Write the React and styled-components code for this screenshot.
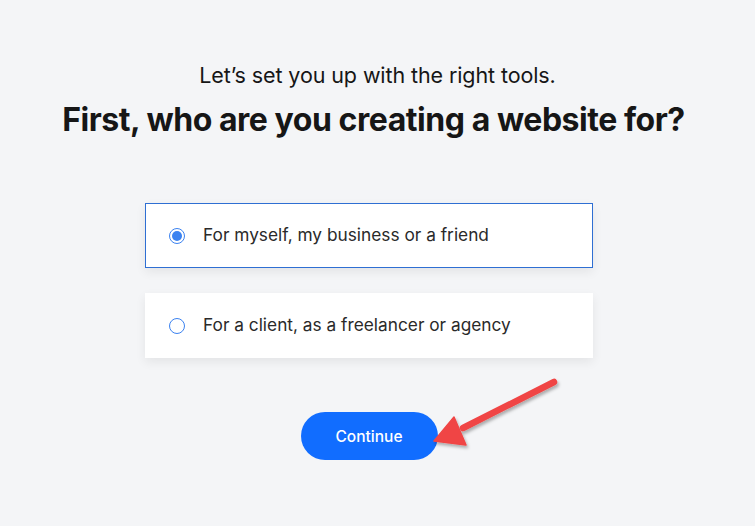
import React, { useState } from "react";
import styled, { createGlobalStyle } from "styled-components";

const GlobalStyle = createGlobalStyle`
  html, body {
    margin: 0;
    padding: 0;
    background: #f4f5f7;
    font-family: Inter, "Noto Sans", sans-serif;
    color: #161616;
  }
`;

const Page = styled.div`
  width: 755px;
  height: 526px;
  display: flex;
  flex-direction: column;
  align-items: center;
  padding-top: 61px;
  box-sizing: border-box;
`;

const Subtitle = styled.p`
  margin: 0;
  font-size: 21.5px;
  line-height: 28px;
  font-weight: 400;
  letter-spacing: -0.1px;
`;

const Title = styled.h1`
  margin: 11px 8px 0 0;
  font-size: 32px;
  line-height: 40px;
  font-weight: 700;
  letter-spacing: -0.45px;
`;

/* cards and button sit a little left of the page centre in the reference */
const Options = styled.div`
  margin: 63px 17px 0 0;
  display: flex;
  flex-direction: column;
  gap: 25px;
  width: 448px;
`;

const Option = styled.label`
  height: 65px;
  box-sizing: border-box;
  display: flex;
  align-items: center;
  padding: 0 0 3px 23px;
  gap: 18px;
  background: #ffffff;
  border: 1px solid ${({ active }) => (active ? "#2f6fd3" : "#ffffff")};
  box-shadow: 0 4px 10px rgba(0, 0, 0, 0.07);
  cursor: pointer;
  font-size: 17.3px;
  color: #2a2a2a;
`;

const Radio = styled.span`
  width: 16px;
  height: 16px;
  box-sizing: border-box;
  border-radius: 50%;
  border: 1.5px solid #3b82f0;
  display: flex;
  align-items: center;
  justify-content: center;
  flex-shrink: 0;
  margin-top: 3px;

  &::after {
    content: "";
    width: 10px;
    height: 10px;
    border-radius: 50%;
    background: ${({ checked }) => (checked ? "#3b82f0" : "transparent")};
  }
`;

const ButtonWrap = styled.div`
  margin: 54px 17px 0 0;
  position: relative;
`;

const Button = styled.button`
  display: block;
  width: 137px;
  height: 48px;
  border: none;
  border-radius: 24px;
  background: #116dff;
  color: #ffffff;
  font-family: Inter, "Noto Sans", sans-serif;
  font-size: 15.5px;
  font-weight: 500;
  padding-top: 2px;
  cursor: pointer;
`;

const Arrow = styled.svg`
  position: absolute;
  left: 120px;
  top: -40px;
  overflow: visible;
  pointer-events: none;
`;

const options = [
  "For myself, my business or a friend",
  "For a client, as a freelancer or agency",
];

export default function App() {
  const [selected, setSelected] = useState(0);
  return (
    <>
      <GlobalStyle />
      <Page>
        <Subtitle>Let’s set you up with the right tools.</Subtitle>
        <Title>First, who are you creating a website for?</Title>
        <Options>
          {options.map((text, i) => (
            <Option key={i} active={selected === i} onClick={() => setSelected(i)}>
              <Radio checked={selected === i} />
              {text}
            </Option>
          ))}
        </Options>
        <ButtonWrap>
          <Button>Continue</Button>
          <Arrow width="140" height="80" viewBox="0 0 140 80">
            <defs>
              <filter id="sh" x="-20%" y="-20%" width="140%" height="140%">
                <feDropShadow dx="1.5" dy="2.5" stdDeviation="1.5" floodColor="#000" floodOpacity="0.3" />
              </filter>
            </defs>
            <g filter="url(#sh)" fill="#f04545" stroke="#f04545">
              <line x1="133" y1="10" x2="42" y2="56" strokeWidth="6.5" strokeLinecap="round" />
              <polygon points="13,69 33,45 45,73" strokeWidth="1.5" strokeLinejoin="round" />
            </g>
          </Arrow>
        </ButtonWrap>
      </Page>
    </>
  );
}
